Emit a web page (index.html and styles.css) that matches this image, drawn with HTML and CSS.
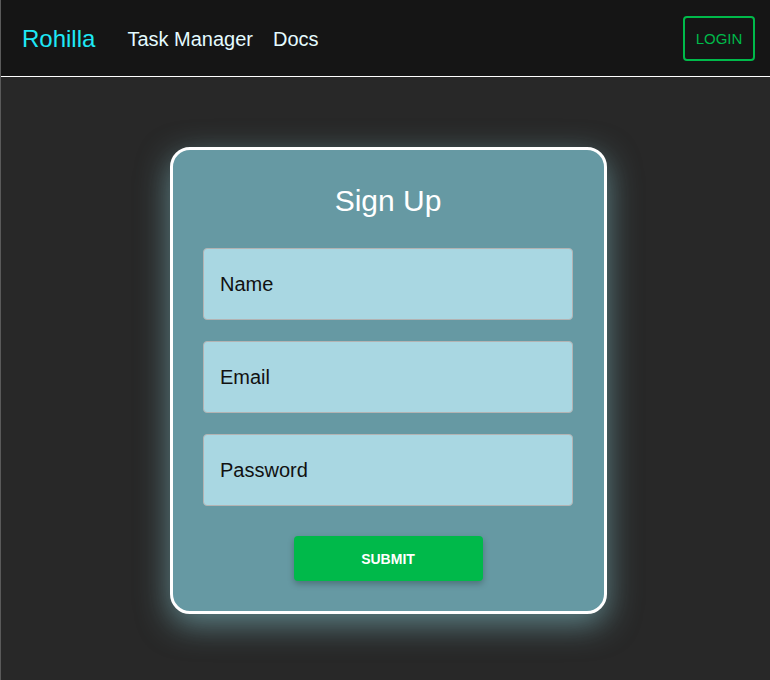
FILE: index.html
```html
<!DOCTYPE html>
<html>
<head>
<meta charset="utf-8">
<link rel="stylesheet" href="styles.css">
</head>
<body>
<header class="nav">
  <div class="nav-left">
    <a class="brand">Rohilla</a>
    <a class="link">Task Manager</a>
    <a class="link">Docs</a>
  </div>
  <button class="login">LOGIN</button>
</header>
<main class="main">
  <form class="card">
    <h1 class="title">Sign Up</h1>
    <div class="field">Name</div>
    <div class="field">Email</div>
    <div class="field">Password</div>
    <button type="button" class="submit">SUBMIT</button>
  </form>
</main>
</body>
</html>
```
FILE: styles.css
```css
html, body {
  margin: 0;
  padding: 0;
  height: 100%;
}
body {
  background: #282828;
  font-family: "Liberation Sans", Arial, sans-serif;
  border-left: 1px solid #5a5a5a;
  box-sizing: border-box;
  overflow: hidden;
}
.nav {
  height: 76px;
  background: #151515;
  border-bottom: 1px solid #ffffff;
  display: flex;
  align-items: center;
  justify-content: space-between;
  padding: 2px 15px 0 21px;
  box-sizing: border-box;
  height: 77px;
}
.nav-left {
  display: flex;
  align-items: center;
}
.brand {
  color: #1ee8f5;
  font-size: 24px;
  margin-right: 32px;
}
.link {
  color: #e4fbff;
  font-size: 20px;
  margin-right: 20px;
}
.login {
  width: 72px;
  height: 45px;
  margin-top: -2px;
  background: transparent;
  border: 2px solid #00b94a;
  border-radius: 4px;
  color: #00b94a;
  font-family: "Liberation Sans", Arial, sans-serif;
  font-size: 15px;
  padding: 0;
}
.main {
  display: flex;
  justify-content: center;
  padding-top: 70px;
  padding-left: 5px;
}
.card {
  width: 437px;
  box-sizing: border-box;
  background: #6699a3;
  border: 3px solid #ffffff;
  border-radius: 20px;
  padding: 0 30px 30px;
  display: flex;
  flex-direction: column;
  align-items: center;
  box-shadow: 0 10px 32px rgba(150, 225, 235, 0.5);
  height: 467px;
}
.title {
  margin: 33px 0 29px;
  font-weight: normal;
  font-size: 30px;
  color: #ffffff;
  line-height: 36px;
}
.field {
  width: 370px;
  height: 72px;
  box-sizing: border-box;
  background: #a9d7e2;
  border: 1px solid #b3b3b3;
  border-radius: 4px;
  padding-left: 16px;
  display: flex;
  align-items: center;
  font-size: 20px;
  color: #111;
  margin-bottom: 21px;
}
.submit {
  margin-top: 9px;
  width: 189px;
  height: 45px;
  background: #00b94a;
  border: none;
  border-radius: 4px;
  color: #ffffff;
  font-family: "Liberation Sans", Arial, sans-serif;
  font-weight: bold;
  font-size: 14px;
  box-shadow: 0 3px 6px rgba(0, 0, 0, 0.25);
}
```
